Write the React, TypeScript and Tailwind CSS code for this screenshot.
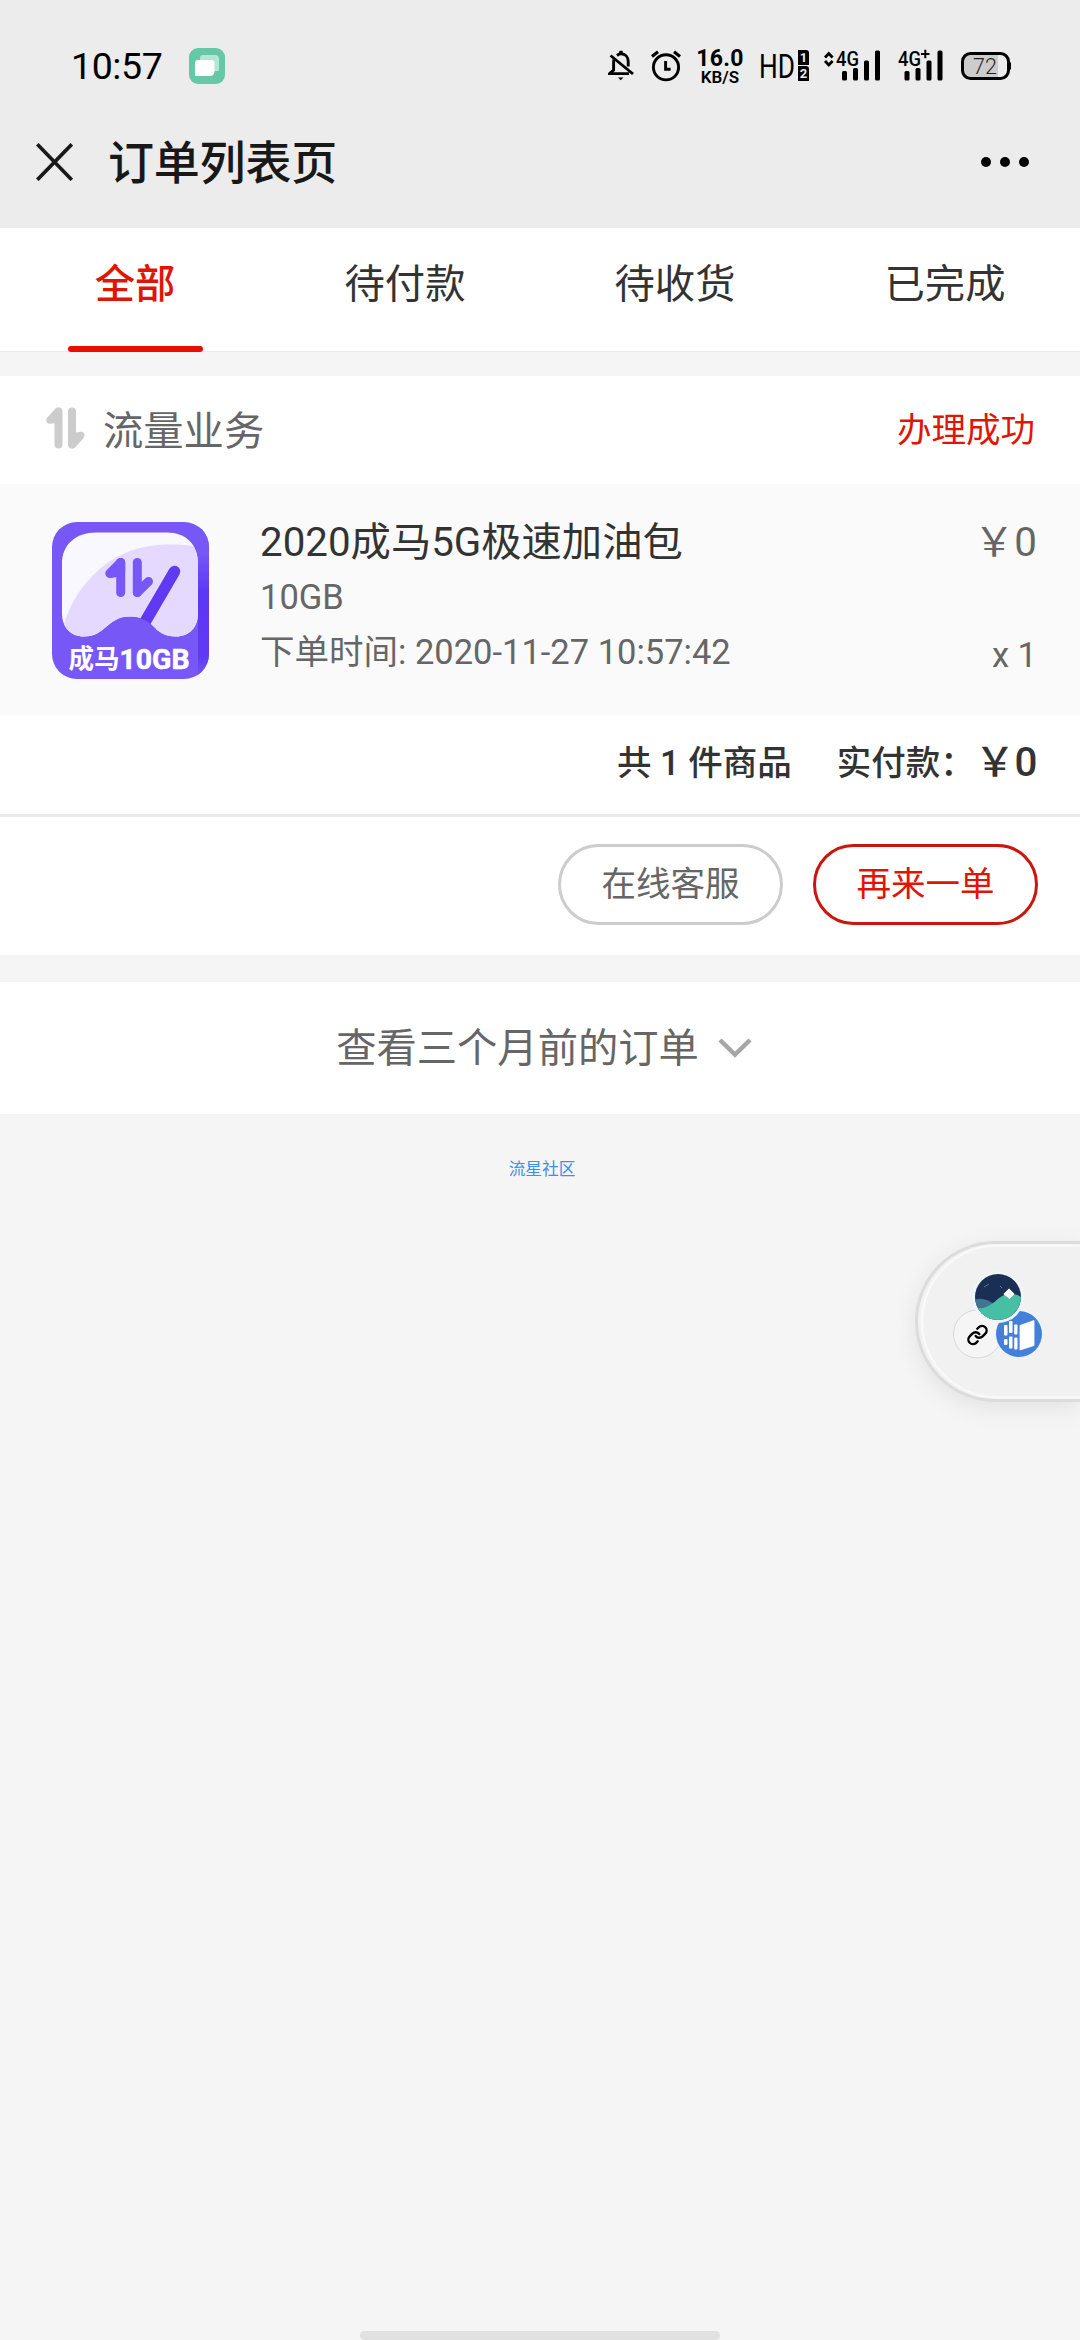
import clsx from 'clsx';
import { Link } from 'lucide-react';

const tabs = ['全部', '待付款', '待收货', '已完成'];

const BellOff = () => (
  <svg className="w-[26px] h-[32px]" viewBox="0 0 26 32" fill="none" stroke="#000" strokeWidth="2.900">
    <path d="M9 5.500C10.500 4.300 11.700 3.800 13 3.800c4.600 0 7.200 3.600 7.200 7.600v5" />
    <path d="M6 9.500c-.3 1-.4 2-.4 3.200V20L1.500 23.600h19.500" />
    <path d="M2.500 5.500l22.500 18.500" />
    <path d="M13 4V.8" strokeWidth="3.400" />
    <path d="M10 27.500h5.500l-2.700 2.800z" fill="#000" stroke="none" />
  </svg>
);

const Alarm = () => (
  <svg className="w-[30px] h-[32px]" viewBox="0 0 30 32" fill="none" stroke="#000" strokeWidth="2.900">
    <circle cx="15" cy="17.300" r="12.600" />
    <path d="M14.600 11v8.300h5" />
    <path d="M1 6.500l6-4.700M29 6.500l-6-4.700" strokeWidth="3.200" />
  </svg>
);

const SimBadge = ({ label }: { label: string }) => (
  <span className="w-[11px] h-[14.500px] bg-black text-[#ececec] rounded-tr-[3px] text-[13px] font-bold leading-[15px] text-center">
    {label}
  </span>
);

const Bars = () => (
  <>
    <rect x="0" y="21" width="5" height="9.500" rx="1.500" />
    <rect x="11" y="18" width="5" height="12.500" rx="1.500" />
    <rect x="22" y="10.500" width="5" height="20" rx="1.500" />
    <rect x="33" y="0.500" width="5" height="30" rx="1.500" />
  </>
);

const StatusBar = () => (
  <div className="h-[132px] flex items-center pl-[71px] pr-[68px] text-black">
    <span className="w-[118px] text-[37.500px] leading-none pt-[2px] tracking-[-0.4px]">10:57</span>
    <svg className="w-[36px] h-[36px]" viewBox="0 0 36 36">
      <rect width="36" height="36" rx="9" fill="#67c8a8" />
      <path d="M14 7h12a4 4 0 0 1 4 4v12H11V10a3 3 0 0 1 3-3z" fill="#b5e5d5" />
      <path d="M9 12h13.500a3 3 0 0 1 3 3v8.500a4.500 4.500 0 0 1-4.500 4.500H6V15a3 3 0 0 1 3-3z" fill="#fff" />
    </svg>
    <div className="ml-auto flex items-start h-[32px]">
      <BellOff />
      <div className="ml-[17px]">
        <Alarm />
      </div>
      <div className="ml-[14px] w-[50px] -mt-[2px] flex flex-col items-center">
        <span className="text-[23px] leading-[21px] font-bold tracking-[0.3px]">16.0</span>
        <span className="text-[17px] leading-[16px] font-semibold">KB/S</span>
      </div>
      <svg className="ml-[15px] w-[38px] h-[32px] overflow-visible" viewBox="0 0 38 32">
        <text x="-1" y="27.500" fontSize="32.500" textLength="36" lengthAdjust="spacingAndGlyphs">HD</text>
      </svg>
      <div className="flex flex-col gap-[1.500px]">
        <SimBadge label="1" />
        <SimBadge label="2" />
      </div>
      <svg className="ml-[15px] w-[57px] h-[32px] overflow-visible" viewBox="0 0 57 32">
        <path d="M1 7.500L4.800 3.500l3.800 4M1 11l3.800 4 3.800-4" fill="none" stroke="#000" strokeWidth="2.800" />
        <text x="12" y="15.500" fontSize="19.500" fontWeight="500" textLength="23" lengthAdjust="spacingAndGlyphs">4G</text>
        <g transform="translate(18)">
          <Bars />
        </g>
      </svg>
      <svg className="ml-[17px] w-[45px] h-[32px] overflow-visible" viewBox="0 0 45 32">
        <text x="0" y="15.500" fontSize="19.500" fontWeight="500" textLength="23" lengthAdjust="spacingAndGlyphs">4G</text>
        <path d="M23 4h8.500M27.300-.2v8.500" stroke="#000" strokeWidth="2" />
        <g transform="translate(6.500)">
          <Bars />
        </g>
      </svg>
      <svg className="ml-[18px] w-[51px] h-[32px]" viewBox="0 0 51 32">
        <path d="M10 2.500h27v26H10a8 8 0 0 1-8-8v-10a8 8 0 0 1 8-8z" fill="#ccc" />
        <rect x="1.500" y="3.500" width="46" height="25" rx="8" fill="none" stroke="#000" strokeWidth="3" />
        <path d="M47 10l3 3v6l-3 3z" />
        <text x="24" y="23.500" fontSize="21.500" fontWeight="300" textAnchor="middle" fill="#222">72</text>
      </svg>
    </div>
  </div>
);

const NavBar = () => (
  <div className="h-[96px] flex items-center pl-[36px] pr-[51px] pb-[38px] pt-[2px]">
    <svg className="w-[37px] h-[38px]" viewBox="0 0 37 38" stroke="#191919" strokeWidth="3.700">
      <path d="M1.300 1.300l34.500 35.500M35.800 1.300L1.300 36.800" />
    </svg>
    <span className="ml-[35px] mt-[2px] text-[46px] leading-[56px] font-medium text-[#181818] tracking-[-0.200px]">
      订单列表页
    </span>
    <div className="ml-auto flex gap-[9px]">
      <i className="size-[10px] rounded-full bg-black" />
      <i className="size-[10px] rounded-full bg-black" />
      <i className="size-[10px] rounded-full bg-black" />
    </div>
  </div>
);

const FlowIcon = ({ className }: { className?: string }) => (
  <svg className={className} viewBox="0 0 39 42" fill="none" stroke="currentColor" strokeLinecap="round" strokeLinejoin="round">
    <path d="M12.500 4.500v33" strokeWidth="8" />
    <path d="M26 4.500v33" strokeWidth="8" />
    <path d="M4 13l8-8.500V12z" strokeWidth="7.500" />
    <path d="M34.800 28.500l-8 9V30z" strokeWidth="7.500" />
  </svg>
);

const ProductIcon = () => (
  <svg className="w-[157px] h-[157px]" viewBox="0 0 157 157">
    <defs>
      <clipPath id="tile">
        <rect width="157" height="157" rx="25" />
      </clipPath>
      <clipPath id="gauge">
        <path d="M44 10.500h71c19 0 31 12 31 31v50c0 14-9 23-22 23-23 0-23-20-46-20s-24 20-46 20c-13 0-22-9-22-23v-50c0-19 14-31 34-31z" />
      </clipPath>
      <linearGradient id="edge" x1="0" y1="0" x2="0" y2="1">
        <stop offset="0.200" stopColor="#7757f6" />
        <stop offset="0.450" stopColor="#5c37f3" />
        <stop offset="0.850" stopColor="#6039f3" />
        <stop offset="1" stopColor="#7757f6" />
      </linearGradient>
    </defs>
    <g clipPath="url(#tile)">
      <rect width="157" height="157" fill="#7757f6" />
      <rect x="146" width="11" height="157" fill="url(#edge)" />
    </g>
    <g clipPath="url(#gauge)">
      <rect width="157" height="157" fill="#f9f7ff" />
      <path d="M11 105C24 60 62 22 116 22.500c12 0 22 0 32 4v94H11z" fill="#e5d9ff" />
    </g>
    <path d="M93 100l29.500-50.500" stroke="#5f3af2" strokeWidth="11.500" strokeLinecap="round" />
    <path d="M50 112c11-6 14-17 28-17s20 6 26 12v10H50z" fill="#7757f6" />
    <g fill="#7757f6" stroke="#7757f6" strokeLinecap="round" strokeLinejoin="round" strokeWidth="9">
      <path d="M68.700 40.500V70.500" />
      <path d="M57.800 51.500L68.700 40.500V50z" />
      <path d="M85.300 40.500V70.500" />
      <path d="M85.300 70.500L96.500 59.500" />
    </g>
    <g fill="#fff" fontWeight="700">
      <text x="16.500" y="146" fontSize="26" textLength="51" lengthAdjust="spacingAndGlyphs">成马</text>
      <text x="67.500" y="146.500" fontSize="28.500" textLength="70" lengthAdjust="spacingAndGlyphs" stroke="#fff" strokeWidth="0.600">10GB</text>
    </g>
  </svg>
);

const OrderCard = () => (
  <div className="mt-[24px] bg-white">
    <div className="h-[108px] flex items-center pl-[46px] pr-[45px]">
      <FlowIcon className="w-[39px] h-[42px] text-[#ccc] -mt-[4px]" />
      <span className="ml-[18px] mt-[4px] text-[40.300px] leading-none text-[#666]">流量业务</span>
      <span className="ml-auto mt-[1px] text-[34.500px] leading-none text-[#df1505]">办理成功</span>
    </div>
    <div className="h-[231px] bg-[#fafafa] flex pl-[52px] pr-[43px] pt-[38px]">
      <ProductIcon />
      <div className="ml-[51px] mt-[1px] flex flex-col text-[34.500px] text-[#666]">
        <span className="text-[40.300px] leading-[40px] text-[#333]">2020成马5G极速加油包</span>
        <span className="mt-[16px] leading-[36px]">10GB</span>
        <span className="mt-[19px] leading-[36px]">下单时间: 2020-11-27 10:57:42</span>
      </div>
      <div className="ml-auto mt-[1px] flex flex-col items-end text-[#666]">
        <span className="text-[40.300px] leading-[40px]">￥0</span>
        <span className="mt-[74px] text-[34.500px] leading-[36px]">x 1</span>
      </div>
    </div>
    <div className="h-[99px] flex items-center justify-end pr-[43px] pb-[2px] text-[34.500px] leading-none font-medium text-[#333]">
      <span>共 1 件商品</span>
      <span className="ml-[45px]">实付款：</span>
      <span className="text-[40.300px] tracking-[-0.500px]">￥0</span>
    </div>
    <div className="h-[141px] border-t-3 border-[#ebebeb] flex justify-end gap-[30px] pt-[27px] pr-[42px] text-[34.500px] leading-none">
      <button className="w-[225px] h-[81px] border-3 border-[#ccc] rounded-full text-[#666]">在线客服</button>
      <button className="w-[225px] h-[81px] border-3 border-[#c9160f] rounded-full text-[#df1505]">再来一单</button>
    </div>
  </div>
);

const FloatingWindow = () => (
  <div className="absolute right-0 top-[1241px] w-[165px] h-[161px] rounded-l-full border-3 border-r-0 border-[#dcdcdc] bg-[#f1f1f1] shadow-[0_6px_24px_rgba(0,0,0,0.08)]">
    <svg className="w-full h-full" viewBox="918 1244 162 155">
      <defs>
        <clipPath id="scene">
          <circle cx="998" cy="1297" r="23" />
        </clipPath>
      </defs>
      <path d="M1080 1245.500H998a76 76 0 0 0 0 152h82" fill="none" stroke="#f9f9f9" strokeWidth="2.500" />
      <circle cx="977.500" cy="1334" r="24" fill="#f5f5f5" stroke="#d8d8d8" />
      <circle cx="1019" cy="1334" r="24.500" fill="#eef5f8" />
      <circle cx="1019" cy="1334" r="23" fill="#4480da" />
      <g fill="#fff">
        <path d="M1020 1325.500l14-5v25l-14 4.500z" strokeLinejoin="round" stroke="#fff" strokeWidth=".8" />
        <rect x="1004" y="1325" width="3.500" height="10.500" rx="1" />
        <rect x="1004" y="1339" width="3.500" height="6" rx="1" />
        <rect x="1009" y="1321" width="3.500" height="12" rx="1" />
        <rect x="1009" y="1336.500" width="3.500" height="12" rx="1" />
        <rect x="1014.200" y="1324.500" width="3.300" height="10" rx="1" />
        <rect x="1014.200" y="1337.500" width="3.300" height="12" rx="1" />
      </g>
      <circle cx="998" cy="1297" r="26" fill="#eef5f8" />
      <g clipPath="url(#scene)">
        <rect x="970" y="1270" width="56" height="56" fill="#1b2f55" />
        <path d="M970 1302c9-6 17-3 24 2v20h-24z" fill="#3f7691" />
        <path d="M974 1308c20 3 22-14 36-14 6 0 10 1 14 6v24h-50z" fill="#46bfa4" />
        <path d="M1009 1289.500l4.500 4.500-4 4-5-4z" fill="#fff" stroke="#fff" strokeWidth="1.500" />
      </g>
      <path d="M984 1287l5-3M1000 1286l2 2" stroke="#5c7396" strokeWidth="1" />
      <Link x="966.500" y="1324" width="22" height="22" color="#000" strokeWidth={2.600} />
    </svg>
  </div>
);

const App = () => {
  return (
    <div className="relative w-[1080px] h-[2340px] overflow-hidden flex flex-col bg-[#f5f5f5] font-[Roboto,'Noto_Sans_CJK_SC',sans-serif]">
      <div className="bg-[#ececec]">
        <StatusBar />
        <NavBar />
      </div>
      <div className="h-[124px] bg-white border-b border-[#ebebeb] grid grid-cols-4">
        {tabs.map((tab, index) => (
          <div
            key={tab}
            className={clsx(
              'flex flex-col items-center justify-between pt-[37px] text-[40.300px]',
              index === 0 ? 'font-medium text-[#df1505]' : 'text-[#333]'
            )}
          >
            <span className="leading-[40px]">{tab}</span>
            {index === 0 && <i className="w-[135px] h-[6px] rounded-full bg-[#e80e04] -mb-[1px]" />}
          </div>
        ))}
      </div>
      <OrderCard />
      <div className="mt-[27px] h-[132px] bg-white flex items-center justify-center gap-[19px] pl-[8px] pt-[3px] text-[40.300px] leading-none text-[#666]">
        查看三个月前的订单
        <svg className="w-[34px] h-[20px] -mt-[4px]" viewBox="0 0 34 20" fill="none" stroke="#a6a6a6" strokeWidth="4.500">
          <path d="M2 2l15 14.500L32 2" />
        </svg>
      </div>
      <span className="mt-[47px] text-center text-[16.700px] leading-[17px] pl-[4px] text-[#3a8fef]">流星社区</span>
      <i className="mt-auto w-[360px] h-[9px] mx-auto rounded-full bg-[#e1e1e1]" />
      <FloatingWindow />
    </div>
  );
};

export default App;
